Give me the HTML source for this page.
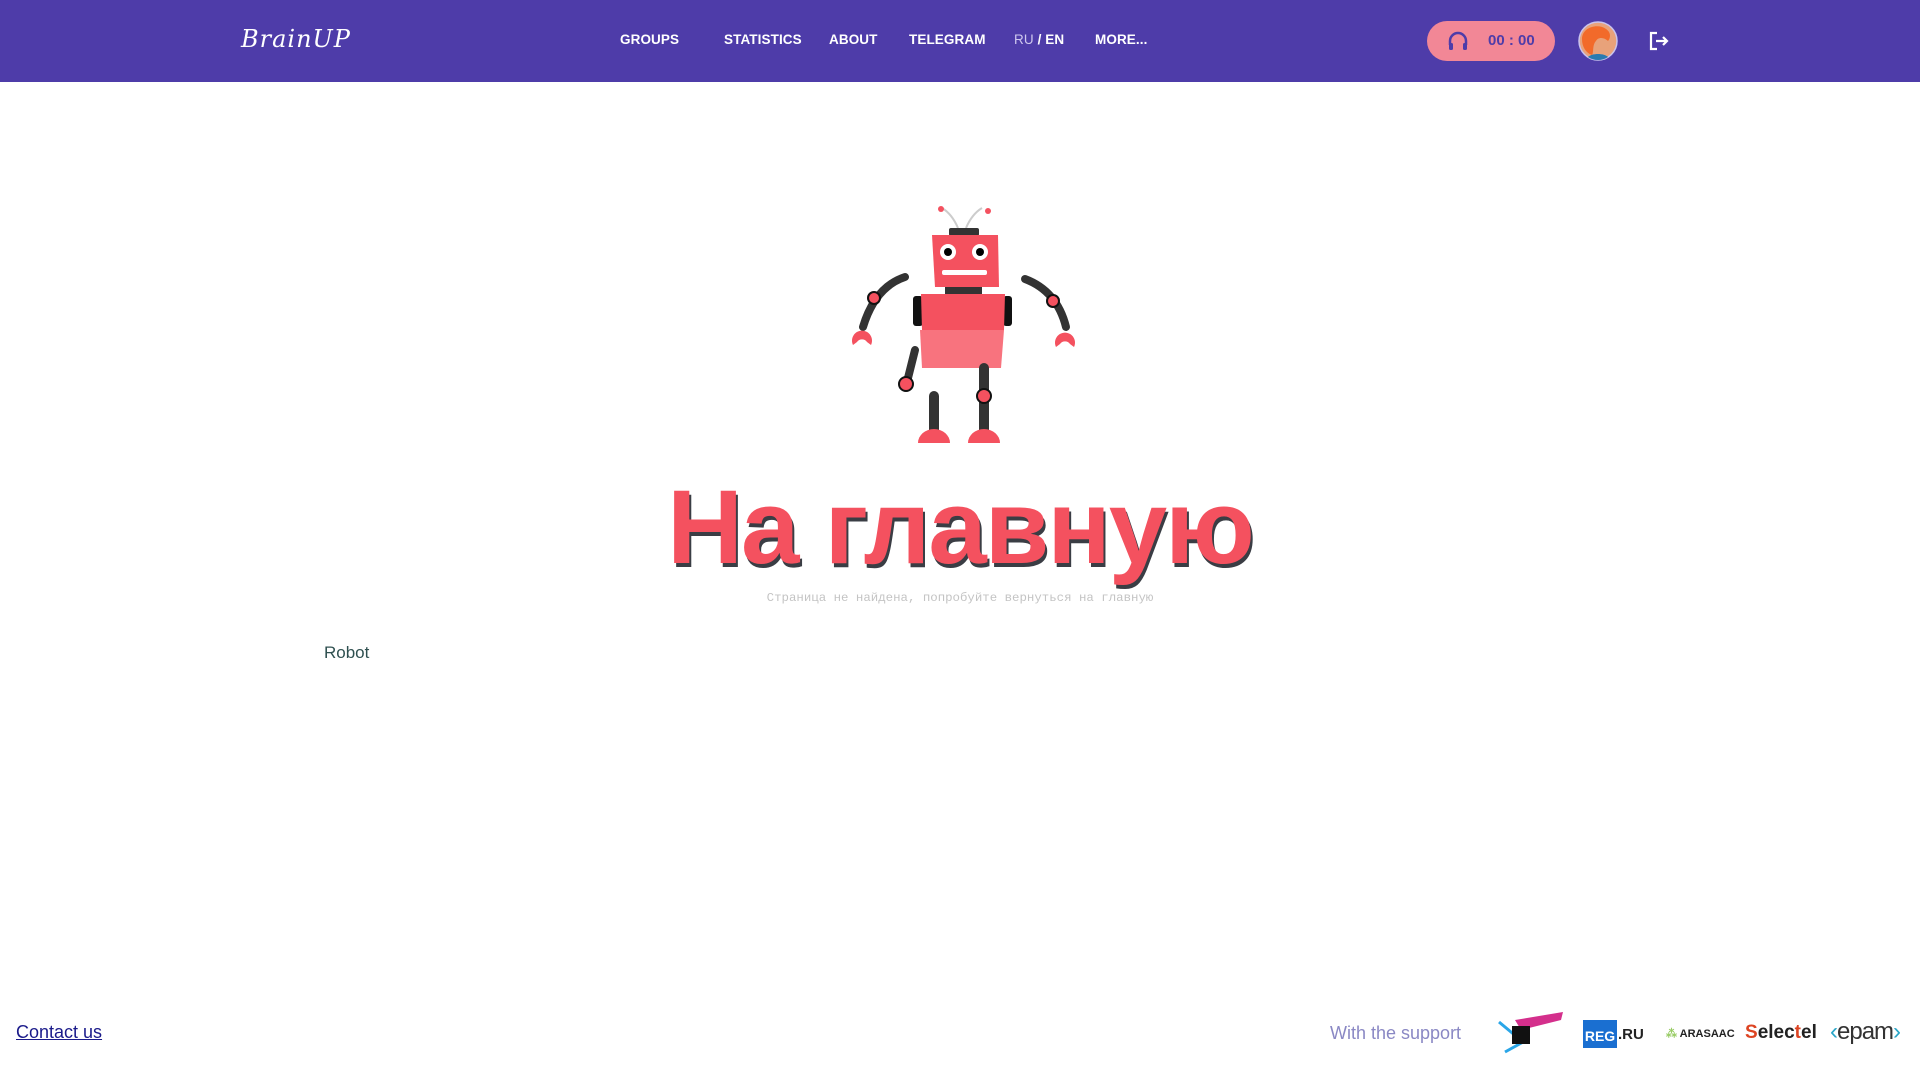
<!DOCTYPE html>
<html><head><meta charset="utf-8"><style>
*{margin:0;padding:0;box-sizing:border-box}
body{width:1920px;height:1080px;background:#fff;position:relative;overflow:hidden;font-family:"Liberation Sans",sans-serif}
.hdr{position:absolute;left:0;top:0;width:1920px;height:82px;background:#4e3ca9}
.nav{position:absolute;top:32px;color:#fff;font-weight:bold;font-size:13.5px;letter-spacing:.1px}
.logo{position:absolute;left:241px;top:25px;color:#fff;font-family:"DejaVu Serif",serif;font-style:italic;font-size:24px;letter-spacing:1px;font-weight:normal}
.pill{position:absolute;left:1427px;top:21px;width:128px;height:40px;border-radius:20px;background:#f28796}
.pill span{position:absolute;left:61px;top:11px;color:#4e3ca9;font-weight:bold;font-size:15px}
.h1{position:absolute;left:0;width:1920px;top:468px;text-align:center;font-weight:bold;font-size:105px;color:#f4515f;text-shadow:2px 4px 0 #3a3d44;letter-spacing:-2px}
.sub{position:absolute;left:0;width:1920px;top:591px;text-align:center;font-family:"Liberation Mono",monospace;font-size:12.4px;color:#c4c4c4}
</style></head><body>
<div class="hdr">
<div class="logo">BrainUP</div>
<div class="nav" style="left:620px">GROUPS</div>
<div class="nav" style="left:724px">STATISTICS</div>
<div class="nav" style="left:829px">ABOUT</div>
<div class="nav" style="left:909px">TELEGRAM</div>
<div class="nav" style="left:1014px;font-weight:normal;color:#cfc8ee">RU <b style="color:#fff">/ EN</b></div>
<div class="nav" style="left:1095px">MORE...</div>
<div class="pill"><svg style="position:absolute;left:20px;top:10px" width="22" height="20" viewBox="0 0 22 20"><path d="M3 14V10a8 8 0 0 1 16 0v4" fill="none" stroke="#4e3ca9" stroke-width="2.5"/><rect x="2" y="12" width="4" height="7" rx="1.5" fill="#4e3ca9"/><rect x="16" y="12" width="4" height="7" rx="1.5" fill="#4e3ca9"/></svg><span>00 : 00</span></div>
<svg style="position:absolute;left:1578px;top:21px" width="40" height="40" viewBox="0 0 40 40"><circle cx="20" cy="20" r="19" fill="#e8a27a" stroke="#c9c3ee" stroke-width="1.5"/><path d="M4 18c0-12 16-16 24-10 6 4 4 10 2 12-4-4-10-4-12 0-4 4-2 12-4 14-6-2-10-8-10-16z" fill="#f26a2a"/><path d="M10 36c4-4 16-4 20 0a18 18 0 0 1-20 0z" fill="#2a7ab0"/></svg>
<svg style="position:absolute;left:1648px;top:30px" width="22" height="22" viewBox="0 0 22 22"><path d="M9 3H3v16h6M8 11h11M15 7l4 4-4 4" fill="none" stroke="#fff" stroke-width="2.2"/></svg>
</div>

<svg style="position:absolute;left:840px;top:200px" width="250" height="250" viewBox="840 200 250 250">
<path d="M958 228q-6-14-16-20M966 228q6-14 16-20" stroke="#ccc" stroke-width="2" fill="none"/>
<circle cx="941" cy="209" r="3" fill="#f4515f"/><circle cx="988" cy="211" r="3" fill="#f4515f"/>
<rect x="949" y="228" width="30" height="8" rx="2" fill="#333"/>
<path d="M932 235h66l1 52h-64z" fill="#f4515f"/>
<circle cx="948" cy="252" r="8" fill="#fff"/><circle cx="980" cy="252" r="8" fill="#fff"/>
<circle cx="948" cy="252" r="4" fill="#000"/><circle cx="980" cy="252" r="4" fill="#000"/>
<rect x="942" y="270" width="45" height="5" rx="2" fill="#fff"/>
<rect x="945" y="287" width="37" height="10" fill="#333"/>
<rect x="913" y="296" width="10" height="30" rx="3" fill="#111"/><rect x="1003" y="296" width="9" height="30" rx="3" fill="#111"/>
<path d="M921 294h84l-1 36h-82z" fill="#f4515f"/>
<path d="M920 330h84l-3 38h-79z" fill="#f8737e"/>
<path d="M905 277q-30 10-42 50" stroke="#333" stroke-width="8" fill="none" stroke-linecap="round"/>
<path d="M1025 279q32 12 41 48" stroke="#333" stroke-width="8" fill="none" stroke-linecap="round"/>
<circle cx="874" cy="298" r="6" fill="#f4515f" stroke="#111" stroke-width="2"/>
<circle cx="1053" cy="301" r="6" fill="#f4515f" stroke="#111" stroke-width="2"/>
<path d="M853 345a10 10 0 1 1 18 0l-4-3a6 6 0 0 0-10 0z" fill="#f4515f"/>
<path d="M1056 347a10 10 0 1 1 18 0l-4-3a6 6 0 0 0-10 0z" fill="#f4515f"/>
<path d="M915 350l-8 32" stroke="#333" stroke-width="8" stroke-linecap="round"/>
<circle cx="906" cy="384" r="7" fill="#f4515f" stroke="#111" stroke-width="2"/>
<path d="M934 396v36M984 368v64" stroke="#333" stroke-width="10" stroke-linecap="round"/>
<circle cx="984" cy="396" r="7" fill="#f4515f" stroke="#111" stroke-width="2"/>
<path d="M918 443a16 14 0 0 1 32 0z" fill="#f4515f"/><path d="M968 443a16 14 0 0 1 32 0z" fill="#f4515f"/>
</svg>

<div class="h1">На главную</div>
<div class="sub">Страница не найдена, попробуйте вернуться на главную</div>
<div style="position:absolute;left:324px;top:643px;font-size:17px;color:#2f5050">Robot</div>
<div style="position:absolute;left:16px;top:1022px;font-size:18px;color:#1a1a8a;text-decoration:underline">Contact us</div>
<div style="position:absolute;left:1330px;top:1023px;font-size:18px;color:#8a88c4">With the support</div>
<svg style="position:absolute;left:1495px;top:1010px" width="70" height="45" viewBox="0 0 70 45"><path d="M20 10l48-8-2 8-40 10z" fill="#d42f8c"/><path d="M4 12l24 20-18 10" stroke="#2aa6e8" stroke-width="3" fill="none"/><rect x="17" y="16" width="18" height="18" fill="#111"/></svg>
<div style="position:absolute;left:1583px;top:1020px;width:34px;height:28px;background:#1a6fd1;color:#fff;font-weight:bold;font-size:14px;padding-top:8px;text-align:center">REG</div>
<div style="position:absolute;left:1618px;top:1026px;font-weight:bold;font-size:15px;color:#222">.RU</div>
<div style="position:absolute;left:1666px;top:1027px;font-size:11px;font-weight:bold;color:#222"><span style="color:#9c6">⁂</span> ARASAAC</div>
<div style="position:absolute;left:1745px;top:1022px;font-weight:bold;font-size:19px;color:#222"><span style="color:#d42">S</span>elec<span style="color:#d42">t</span>el</div>
<div style="position:absolute;left:1830px;top:1018px;font-size:24px;color:#333;letter-spacing:-1px"><span style="color:#2aa6c8">‹</span>epam<span style="color:#2aa6c8">›</span></div>
</body></html>
